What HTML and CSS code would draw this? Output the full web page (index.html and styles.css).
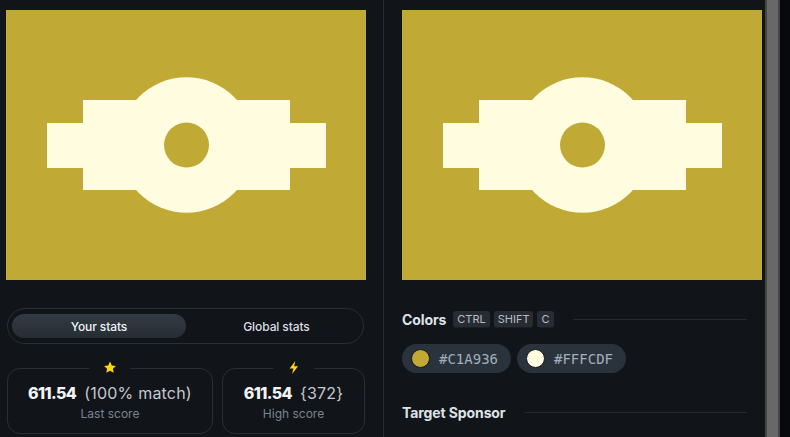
FILE: index.html
```html
<!DOCTYPE html>
<html>
<head>
<meta charset="utf-8">
<link rel="stylesheet" href="styles.css">
</head>
<body>
<div class="app">
  <section class="left">
    <svg class="art" viewBox="0 0 360 270" width="360" height="270">
      <rect width="360" height="270" fill="#C1A936"/>
      <rect x="41" y="113" width="279" height="45" fill="#FFFCDF"/>
      <rect x="77" y="90" width="207" height="90" fill="#FFFCDF"/>
      <circle cx="180.5" cy="135" r="67.7" fill="#FFFCDF"/>
      <circle cx="180.5" cy="135" r="22.5" fill="#C1A936"/>
    </svg>
    <div class="tabs">
      <div class="tab active">Your stats</div>
      <div class="tab">Global stats</div>
    </div>
    <div class="cards">
      <div class="card card-last">
        <span class="badge">
          <svg viewBox="0 0 24 24" width="15" height="15"><path d="M12 2.5l2.9 6.2 6.6.7-4.9 4.5 1.4 6.6L12 17.2l-6 3.3 1.4-6.6-4.9-4.5 6.6-.7z" fill="#FFD60A"/></svg>
        </span>
        <div class="score"><b>611.54</b><span class="extra">(100% match)</span></div>
        <div class="label">Last score</div>
      </div>
      <div class="card card-high">
        <span class="badge">
          <svg viewBox="0 0 24 24" width="15" height="15"><path d="M14 1.5L5 13.5h6l-2 9 9.5-12.5h-6.2z" fill="#FFD60A"/></svg>
        </span>
        <div class="score"><b>611.54</b><span class="extra">{372}</span></div>
        <div class="label">High score</div>
      </div>
    </div>
  </section>
  <section class="right">
    <svg class="art" viewBox="0 0 360 270" width="360" height="270">
      <rect width="360" height="270" fill="#C1A936"/>
      <rect x="41" y="113" width="279" height="45" fill="#FFFCDF"/>
      <rect x="77" y="90" width="207" height="90" fill="#FFFCDF"/>
      <circle cx="180.5" cy="135" r="67.7" fill="#FFFCDF"/>
      <circle cx="180.5" cy="135" r="22.5" fill="#C1A936"/>
    </svg>
    <div class="heading heading-colors">
      <span class="title">Colors</span>
      <span class="keys"><kbd>CTRL</kbd><kbd>SHIFT</kbd><kbd>C</kbd></span>
      <span class="rule"></span>
    </div>
    <div class="chips">
      <div class="chip"><span class="dot dot-gold"></span>#C1A936</div>
      <div class="chip"><span class="dot dot-cream"></span>#FFFCDF</div>
    </div>
    <div class="heading heading-sponsor">
      <span class="title">Target Sponsor</span>
      <span class="rule"></span>
    </div>
  </section>
  <div class="scrollbar"><div class="thumb"></div></div>
  <div class="outside"></div>
</div>
</body>
</html>
```

FILE: styles.css
```css
* { box-sizing: border-box; }
html, body { margin: 0; padding: 0; }
body {
  background: #111418;
  font-family: Inter, "Noto Sans", sans-serif;
  color: #e6e9ee;
  width: 790px;
  height: 437px;
  overflow: hidden;
}
.app {
  display: flex;
  height: 437px;
}
.art { display: block; flex: none; }

.left {
  width: 384px;
  flex: none;
  border-right: 1px solid #262b32;
  padding: 10px 17px 0 6px;
}
.tabs {
  margin-top: 28px;
  margin-left: 1px;
  width: 357px;
  height: 36px;
  border: 1px solid #2a2f36;
  border-radius: 18px;
  padding: 5px 4px;
  display: flex;
}
.tab {
  flex: 1;
  border-radius: 13px;
  font-size: 12px;
  font-weight: 500;
  color: #d9dde3;
  display: flex;
  align-items: center;
  justify-content: center;
  letter-spacing: -0.1px;
}
.tab.active {
  background: linear-gradient(180deg, #323a43, #272d34);
  color: #eef1f4;
  flex: 0 0 174px;
}
.tab + .tab { padding-left: 8px; }

.cards {
  margin-top: 24px;
  margin-left: 1px;
  display: flex;
  gap: 9px;
}
.card {
  position: relative;
  height: 66px;
  border: 1px solid #2a2f36;
  border-radius: 13px;
  display: flex;
  flex-direction: column;
  align-items: center;
  padding-top: 14px;
}
.card-last { width: 206px; }
.card-high { width: 143px; }
.badge {
  position: absolute;
  top: -9px;
  left: 50%;
  transform: translateX(-50%);
  background: #111418;
  padding: 0 13px;
  line-height: 0;
}
.score {
  font-size: 16px;
  line-height: 20px;
  color: #f2f4f7;
  white-space: nowrap;
}
.score b { font-weight: 800; letter-spacing: -0.6px; }
.extra {
  font-size: 16px;
  color: #c4c9d1;
  margin-left: 8px;
  letter-spacing: 0.2px;
}
.label {
  font-size: 12px;
  color: #7b8491;
  margin-top: 3px;
}

.right {
  width: 381px;
  flex: none;
  padding: 10px 18px 0 18px;
}
.heading {
  display: flex;
  align-items: center;
  width: 345px;
}
.heading-colors { margin-top: 31px; }
.heading-sponsor { margin-top: 31px; }
.title {
  font-size: 14px;
  font-weight: 700;
  color: #dfe3e8;
  letter-spacing: -0.1px;
}
.keys { display: flex; gap: 4px; margin-left: 7px; }
kbd {
  font-family: Inter, "Noto Sans", sans-serif;
  font-size: 11px;
  color: #b9bec6;
  background: #272c32;
  border-bottom: 1px solid #1a1d21;
  border-radius: 3px;
  padding: 0 4px;
  height: 17px;
  line-height: 16px;
}
.rule {
  flex: 1;
  height: 1px;
  background: #262b31;
  margin-left: 19px;
}

.chips {
  display: flex;
  gap: 6px;
  margin-top: 16px;
}
.chip {
  height: 29px;
  width: 109px;
  background: #2a333c;
  border-radius: 15px;
  display: flex;
  align-items: center;
  padding-left: 9px;
  font-family: "DejaVu Sans Mono", "Liberation Mono", monospace;
  font-size: 14px;
  color: #a3afbd;
}
.dot {
  width: 19px;
  height: 19px;
  border-radius: 50%;
  border: 1.5px solid #15181c;
  margin-right: 9px;
}
.dot-gold { background: #C1A936; }
.dot-cream { background: #FFFCDF; }

.scrollbar {
  width: 15px;
  flex: none;
  background: #454545;
  padding: 0 2px;
}
.thumb {
  height: 100%;
  background: #686868;
}
.outside {
  flex: 1;
  background: #07090c;
}
```
